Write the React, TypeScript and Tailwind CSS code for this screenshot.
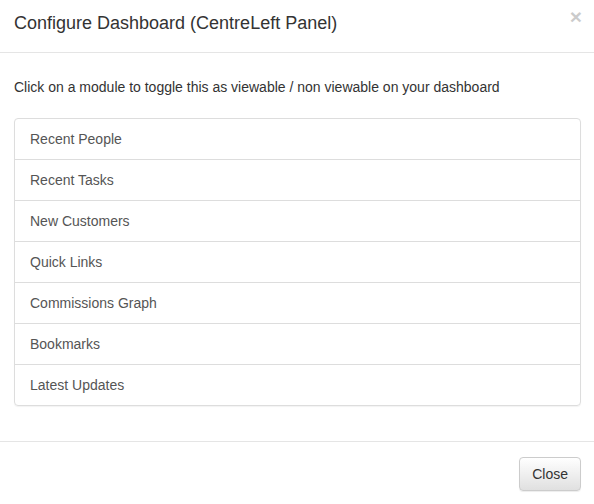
const modules = [
  "Recent People",
  "Recent Tasks",
  "New Customers",
  "Quick Links",
  "Commissions Graph",
  "Bookmarks",
  "Latest Updates",
];

export default function App() {
  return (
    <div className="w-[594px] h-[504px] bg-white font-['Liberation_Sans',Arial,sans-serif] text-[#333]">
      <div className="h-[53px] border-b border-[#e5e5e5] flex items-start justify-between pl-[14px] pr-[12px]">
        <h4 className="pt-[11px] text-[18px] leading-[25px] text-[#333]">
          Configure Dashboard (CentreLeft Panel)
        </h4>
        <button className="mt-[6px] text-[21px] font-bold leading-[21px] text-black opacity-20">
          ×
        </button>
      </div>

      <div className="pl-[14px] pr-[13px] pt-[24px] pb-[35px]">
        <p className="text-[14px] leading-[20px] mb-[21px]">
          Click on a module to toggle this as viewable / non viewable on your dashboard
        </p>
        <ul className="border border-[#ddd] rounded-[4px] shadow-[0_1px_1px_rgba(0,0,0,0.05)]">
          {modules.map((name, i) => (
            <li
              key={name}
              className={`px-[15px] py-[10px] text-[14px] leading-[20px] text-[#555] cursor-pointer ${
                i > 0 ? "border-t border-[#ddd]" : ""
              }`}
            >
              {name}
            </li>
          ))}
        </ul>
      </div>

      <div className="border-t border-[#e5e5e5] flex justify-end pt-[15px] pr-[13px]">
        <button className="h-[34px] px-[12px] text-[14px] text-[#333] border border-[#ccc] rounded-[4px] bg-gradient-to-b from-white to-[#e0e0e0] shadow-[inset_0_1px_0_rgba(255,255,255,0.15),0_1px_1px_rgba(0,0,0,0.075)]">
          Close
        </button>
      </div>
    </div>
  );
}
